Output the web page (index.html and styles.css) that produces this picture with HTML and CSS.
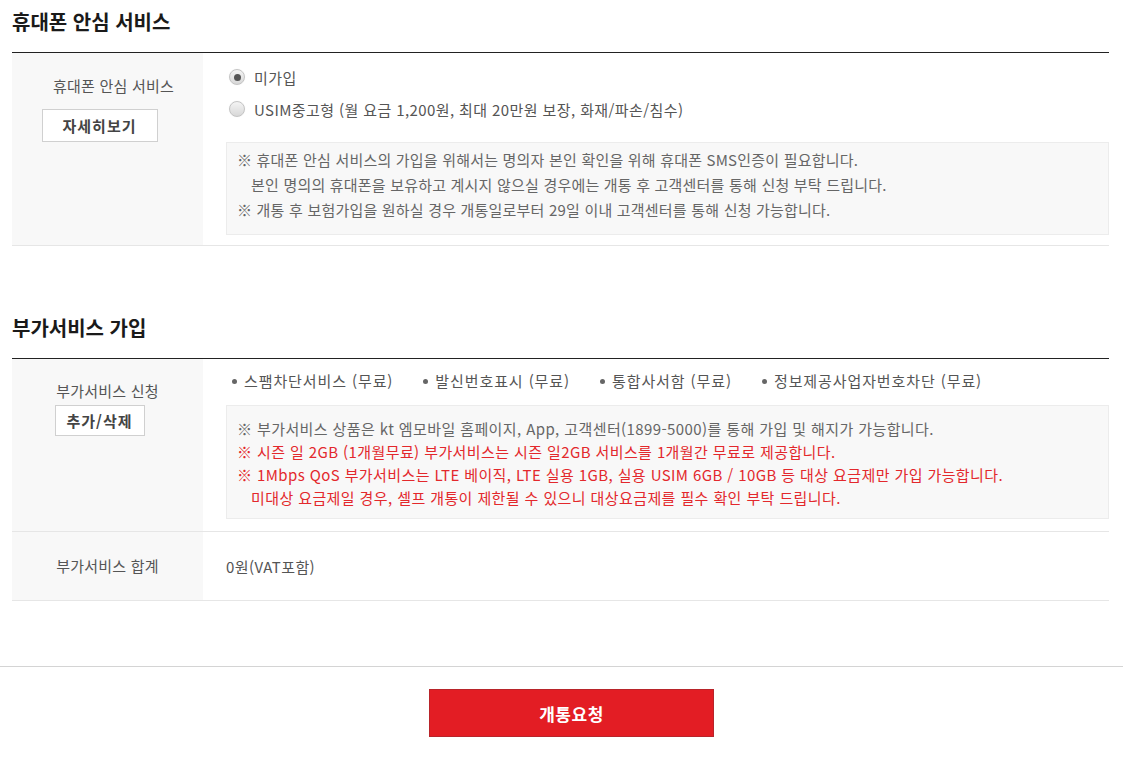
FILE: index.html
```html
<!DOCTYPE html>
<html lang="ko">
<head>
<meta charset="utf-8">
<link rel="stylesheet" href="styles.css">
</head>
<body>
<div class="page">
  <section class="sec">
    <h2 class="sec-title">휴대폰 안심 서비스</h2>
    <div class="table">
      <div class="row row-safe">
        <div class="th th-safe">
          <div class="th-label">휴대폰 안심 서비스</div>
          <button class="sub-btn sub-btn-wide">자세히보기</button>
        </div>
        <div class="td td-safe">
          <label class="radio-row"><span class="radio checked"></span><span>미가입</span></label>
          <label class="radio-row"><span class="radio"></span><span>USIM중고형 (월 요금 1,200원, 최대 20만원 보장, 화재/파손/침수)</span></label>
          <div class="note note-safe">
            <p>※ 휴대폰 안심 서비스의 가입을 위해서는 명의자 본인 확인을 위해 휴대폰 SMS인증이 필요합니다.</p>
            <p class="indent">본인 명의의 휴대폰을 보유하고 계시지 않으실 경우에는 개통 후 고객센터를 통해 신청 부탁 드립니다.</p>
            <p>※ 개통 후 보험가입을 원하실 경우 개통일로부터 29일 이내 고객센터를 통해 신청 가능합니다.</p>
          </div>
        </div>
      </div>
    </div>
  </section>

  <section class="sec sec-second">
    <h2 class="sec-title">부가서비스 가입</h2>
    <div class="table">
      <div class="row row-addon">
        <div class="th th-addon">
          <div class="th-label">부가서비스 신청</div>
          <button class="sub-btn sub-btn-narrow">추가/삭제</button>
        </div>
        <div class="td td-addon">
          <ul class="bullets">
            <li>스팸차단서비스 (무료)</li>
            <li>발신번호표시 (무료)</li>
            <li>통합사서함 (무료)</li>
            <li>정보제공사업자번호차단 (무료)</li>
          </ul>
          <div class="note note-addon">
            <p>※ 부가서비스 상품은 kt 엠모바일 홈페이지, App, 고객센터(1899-5000)를 통해 가입 및 해지가 가능합니다.</p>
            <p class="red">※ 시즌 일 2GB (1개월무료) 부가서비스는 시즌 일2GB 서비스를 1개월간 무료로 제공합니다.</p>
            <p class="red">※ 1Mbps QoS 부가서비스는 LTE 베이직, LTE 실용 1GB, 실용 USIM 6GB / 10GB 등 대상 요금제만 가입 가능합니다.</p>
            <p class="red indent">미대상 요금제일 경우, 셀프 개통이 제한될 수 있으니 대상요금제를 필수 확인 부탁 드립니다.</p>
          </div>
        </div>
      </div>
      <div class="row row-sum">
        <div class="th th-sum">
          <div class="th-label">부가서비스 합계</div>
        </div>
        <div class="td td-sum">0원(VAT포함)</div>
      </div>
    </div>
  </section>
</div>

<footer class="footer">
  <button class="submit-btn">개통요청</button>
</footer>
</body>
</html>
```

FILE: styles.css
```css
* { box-sizing: border-box; }

html, body {
  margin: 0;
  padding: 0;
  background: #fff;
}

body {
  font-family: "Noto Sans CJK KR", "Noto Sans", sans-serif;
  font-size: 15px;
  letter-spacing: 0.4px;
  color: #555;
}

.page {
  padding: 0 14px 0 12px;
}

.sec-title {
  margin: 0;
  padding: 8px 0 16px;
  font-size: 20px;
  line-height: 28px;
  font-weight: 700;
  color: #1a1a1a;
  letter-spacing: 0;
}

.sec-second {
  margin-top: 60px;
}

.table {
  border-top: 1px solid #222;
}

.row {
  display: flex;
  border-bottom: 1px solid #e6e6e6;
}

.th {
  width: 191px;
  flex: none;
  background: #f8f8f8;
  display: flex;
  flex-direction: column;
  align-items: center;
}

.th-label {
  line-height: 22px;
  color: #555;
  letter-spacing: 0.2px;
}

.td {
  flex: 1;
  padding-left: 23px;
}

/* row 1 */
.row-safe { height: 193px; }
.th-safe { padding-top: 22px; }
.th-safe .th-label { padding-left: 12px; }
.th-safe .sub-btn { margin-top: 12px; }
.td-safe { padding-top: 8px; }

.sub-btn {
  font-family: inherit;
  font-size: 15px;
  font-weight: 700;
  color: #444;
  background: #fff;
  border: 1px solid #d0d0d0;
  padding: 0;
  letter-spacing: 1px;
  margin-right: 16px;
}
.sub-btn-wide { width: 116px; height: 33px; }
.sub-btn-narrow { width: 90px; height: 31px; }

.radio-row {
  display: flex;
  align-items: center;
  height: 32px;
  gap: 9px;
  padding-left: 3px;
  color: #555;
}

.radio {
  width: 16px;
  height: 16px;
  border-radius: 50%;
  border: 1px solid #c4c4c4;
  background: linear-gradient(#f4f4f4, #d8d8d8);
  box-shadow: 0 0 1px rgba(0, 0, 0, 0.1);
  display: flex;
  align-items: center;
  justify-content: center;
}
.radio.checked::after {
  content: "";
  width: 7px;
  height: 7px;
  border-radius: 50%;
  background: #555;
}

.note {
  background: #f8f8f8;
  border: 1px solid #ececec;
  padding: 0 10px;
  color: #666;
}
.note p { margin: 0; }
.note .indent { padding-left: 14px; }
.note-safe {
  margin-top: 17px;
  height: 93px;
  padding-top: 4px;
  line-height: 25px;
  letter-spacing: 0.2px;
}
.note-addon {
  margin-top: 12px;
  height: 114px;
  padding-top: 11px;
  line-height: 23px;
}
.red { color: #e3282c; }

/* row 2 */
.row-addon { height: 173px; }
.th-addon { padding-top: 21px; }
.th-addon .sub-btn { margin-top: 3px; }
.td-addon { padding-top: 10px; }

.bullets {
  list-style: none;
  margin: 0;
  padding: 0 0 0 6px;
  display: flex;
  gap: 30px;
  line-height: 24px;
  letter-spacing: 0.9px;
}
.bullets li {
  display: flex;
  align-items: center;
  gap: 7px;
}
.bullets li::before {
  content: "";
  width: 5px;
  height: 5px;
  border-radius: 50%;
  background: #666;
}

/* sum row */
.row-sum { height: 69px; }
.th-sum, .td-sum { justify-content: center; }
.td-sum {
  display: flex;
  flex-direction: column;
}

/* footer */
.footer {
  margin-top: 65px;
  border-top: 1px solid #d4d4d4;
  padding: 22px 0 0 20px;
  display: flex;
  justify-content: center;
}

.submit-btn {
  width: 285px;
  height: 48px;
  background: #e31d24;
  border: 1px solid #b8242a;
  color: #fff;
  font-family: inherit;
  font-size: 17px;
  font-weight: 700;
  letter-spacing: 0.5px;
}
```
